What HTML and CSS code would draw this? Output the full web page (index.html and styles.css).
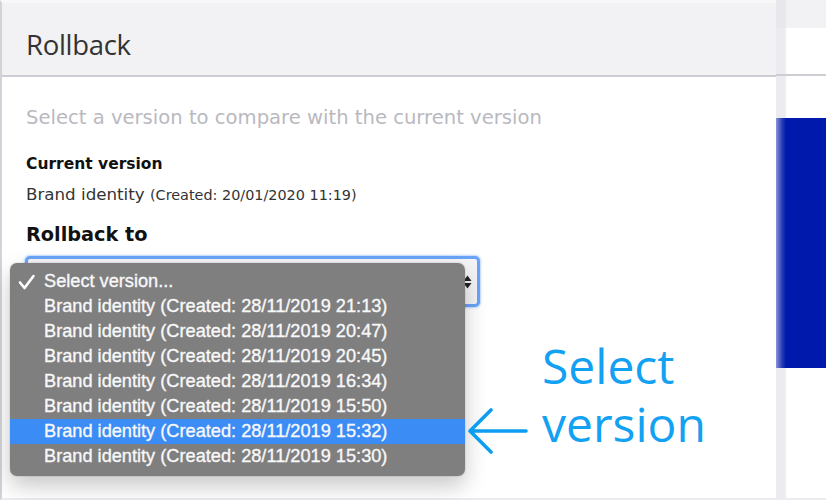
FILE: index.html
```html
<!DOCTYPE html>
<html lang="en">
<head>
<meta charset="utf-8">
<title>Rollback</title>
<link rel="stylesheet" href="styles.css">
</head>
<body>
<div class="screen">
  <section class="modal">
    <header class="modal-head">
      <h1 class="modal-title">Rollback</h1>
    </header>
    <div class="modal-body">
      <p class="hint">Select a version to compare with the current version</p>
      <h2 class="label">Current version</h2>
      <p class="current">Brand identity <span class="created">(Created: 20/01/2020 11:19)</span></p>
      <h2 class="label-lg">Rollback to</h2>
      <div class="select">
        <svg class="select-arrows" width="9" height="14" viewBox="0 0 9 14"><path d="M0.5 6 L4.5 0.5 L8.5 6 Z M0.5 8 L4.5 13.5 L8.5 8 Z" fill="#222"/></svg>
      </div>
      <ul class="menu">
        <li class="menu-item checked"><svg class="check" width="18" height="16" viewBox="0 0 18 16"><path d="M2 8.5 L6.5 14 L15.5 2" fill="none" stroke="#fff" stroke-width="2.6" stroke-linecap="round" stroke-linejoin="round"/></svg>Select version...</li>
        <li class="menu-item">Brand identity (Created: 28/11/2019 21:13)</li>
        <li class="menu-item">Brand identity (Created: 28/11/2019 20:47)</li>
        <li class="menu-item">Brand identity (Created: 28/11/2019 20:45)</li>
        <li class="menu-item">Brand identity (Created: 28/11/2019 16:34)</li>
        <li class="menu-item">Brand identity (Created: 28/11/2019 15:50)</li>
        <li class="menu-item active">Brand identity (Created: 28/11/2019 15:32)</li>
        <li class="menu-item">Brand identity (Created: 28/11/2019 15:30)</li>
      </ul>
    </div>
  </section>
  <aside class="backdrop">
    <div class="bd-top"></div>
    <div class="bd-head"></div>
    <div class="bd-gap"></div>
    <div class="bd-blue"></div>
    <div class="bd-rest"></div>
  </aside>
  <div class="callout">
    <svg class="callout-arrow" width="62" height="48" viewBox="0 0 62 48"><path d="M4 24 H59 M24 3 L3 24 L24 45" fill="none" stroke="#0d9ef2" stroke-width="3.6" stroke-linecap="round" stroke-linejoin="round"/></svg>
    <div class="callout-text">
      <span class="callout-line">Select</span>
      <span class="callout-line">version</span>
    </div>
  </div>
</div>
</body>
</html>
```

FILE: styles.css
```css
* { box-sizing: border-box; }
html, body { margin: 0; padding: 0; background: #fff; }
.screen {
  position: relative;
  width: 826px;
  height: 500px;
  display: flex;
  overflow: hidden;
  font-family: "DejaVu Sans", Verdana, sans-serif;
}
.modal {
  width: 776px;
  flex: none;
  display: flex;
  flex-direction: column;
  border-left: 2px solid #d2d2d9;
  border-top: 3px solid #f8f8f9;
  border-bottom: 2px solid #ececf0;
  background: #fff;
}
.modal-head {
  height: 74px;
  background: #f2f2f4;
  border-bottom: 2px solid #cdcdd4;
  display: flex;
  align-items: center;
  padding: 11px 0 0 24px;
  flex: none;
}
.modal-title {
  margin: 0;
  font-family: "Open Sans", sans-serif;
  font-weight: 400;
  font-size: 27.5px;
  color: #333;
  letter-spacing: -0.3px;
}
.modal-body {
  position: relative;
  flex: 1;
  padding: 29px 0 0 24px;
}
.hint {
  margin: 0;
  font-size: 19.6px;
  line-height: 24px;
  color: #b9b9bf;
}
.label {
  margin: 23px 0 0;
  font-size: 15.5px;
  font-weight: 700;
  line-height: 22px;
  color: #111;
}
.current {
  margin: 8px 0 0;
  font-size: 16.7px;
  line-height: 22px;
  color: #333;
}
.created { font-size: 14.4px; }
.label-lg {
  margin: 17px 0 0;
  font-size: 19.3px;
  font-weight: 700;
  line-height: 24px;
  color: #111;
}
.select {
  margin: 9px 0 0 -1px;
  width: 455px;
  height: 51px;
  border: 3px solid #6aa3f7;
  border-radius: 5px;
  background: #f4f4f6;
  box-shadow: 0 0 2px 1px rgba(106, 163, 247, 0.45);
  display: flex;
  align-items: center;
  justify-content: flex-end;
  padding-right: 5px;
}
.select-arrows { display: block; }
.menu {
  position: absolute;
  left: 8px;
  top: 186px;
  width: 455px;
  margin: 0;
  padding: 6px 0 7px;
  list-style: none;
  background: #7f7f80;
  border-radius: 7px;
  box-shadow: 0 10px 22px rgba(0, 0, 0, 0.22), 0 0 0 1px rgba(0, 0, 0, 0.06);
  font-family: "Liberation Sans", Arial, sans-serif;
}
.menu-item {
  position: relative;
  height: 25px;
  line-height: 25px;
  padding-left: 34px;
  font-size: 18.2px;
  color: #f8f8f8;
  white-space: nowrap;
  -webkit-text-stroke: 0.35px #f8f8f8;
}
.menu-item.active { background: #3c8cf6; }
.check {
  position: absolute;
  left: 8px;
  top: 5px;
}
.backdrop {
  flex: 1;
  display: flex;
  flex-direction: column;
}
.bd-top { height: 28px; background: linear-gradient(to right, #e8e8ec 0, #e8e8ec 9px, #f2f2f4 11px); }
.bd-head {
  height: 48px;
  background: linear-gradient(to right, #ececf0 0, #ececf0 9px, #fff 11px);
  border-bottom: 2px solid #cdcdd4;
}
.bd-gap { height: 42px; background: linear-gradient(to right, #ececf0 0, #ececf0 9px, #fff 11px); }
.bd-blue { height: 250px; background: linear-gradient(to right, #8a95d8 0, #2a3cb8 6px, #0019ad 10px); }
.bd-rest {
  flex: 1;
  background: linear-gradient(to right, #ececf0 0, #ececf0 9px, #fff 11px);
  border-bottom: 2px solid #ececf0;
}
.callout {
  position: absolute;
  left: 467px;
  top: 337px;
  display: flex;
  align-items: flex-end;
  gap: 13px;
}
.callout-arrow {
  display: block;
  margin-bottom: -2px;
}
.callout-text {
  font-family: "Open Sans", sans-serif;
  font-size: 48px;
  color: #12a1f3;
}
.callout-line {
  display: block;
  height: 58px;
  line-height: 58px;
}
```
